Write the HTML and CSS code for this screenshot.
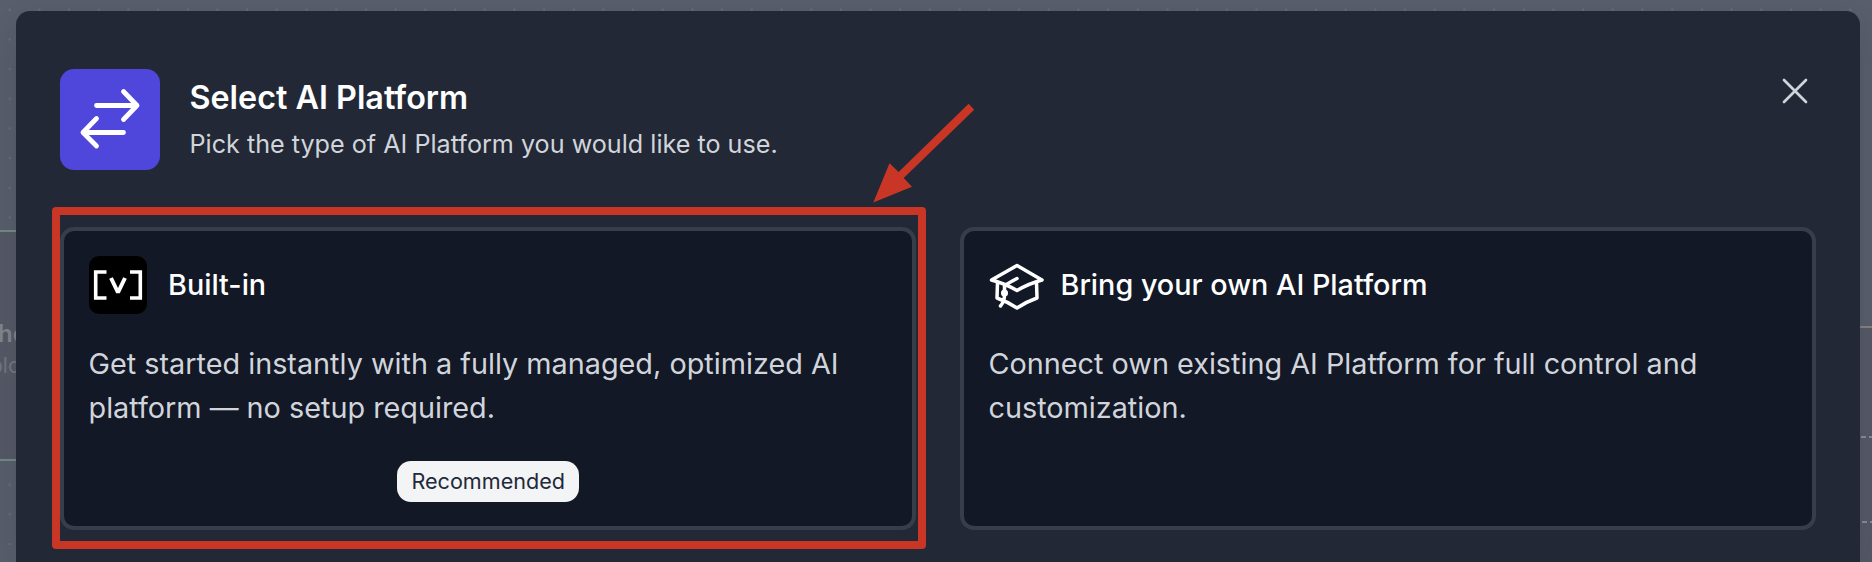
FILE: index.html
```html
<!DOCTYPE html>
<html lang="en">
<head>
<meta charset="utf-8">
<title>Select AI Platform</title>
<link rel="stylesheet" href="styles.css">
</head>
<body>
<div class="canvas">
  <div class="node node-left"><b>ho</b><span>plo</span></div>
  <div class="node node-right"><i class="dash dash-one"></i><i class="dash dash-two"></i></div>
</div>
<main class="modal">
  <header class="head">
    <div class="head-icon">
      <svg width="100" height="101" viewBox="0 0 100 101" fill="none" stroke="#fff" stroke-width="4.8" stroke-linecap="round" stroke-linejoin="round"><path d="M36.500 36.500H77M63.500 22.500L77 36.500L63.500 50.500M63.500 63.500H23M36.500 49.500L23 63.500L36.500 77"/></svg>
    </div>
    <div class="head-text">
      <h1 class="title">Select AI Platform</h1>
      <p class="subtitle">Pick the type of AI Platform you would like to use.</p>
    </div>
    <button class="close" aria-label="Close">
      <svg width="28" height="28" viewBox="0 0 28 28" fill="none" stroke="#d1d5db" stroke-width="2.7" stroke-linecap="round"><path d="M3 3L25 25M25 3L3 25"/></svg>
    </button>
  </header>
  <div class="cards">
    <section class="card">
      <div class="card-head">
        <svg class="logo" width="58" height="58" viewBox="0 0 58 58" fill="none" stroke="#fff"><rect width="58" height="58" rx="10" fill="#000" stroke="none"/><path stroke-width="3.600" d="M17.500 16H6.700V42H17.500M41 16H51.300V42H41"/><path stroke-width="4" stroke-linejoin="bevel" d="M22 22L29 36.500L36 22"/></svg>
        <h2 class="card-title">Built-in</h2>
      </div>
      <p class="card-text">Get started instantly with a fully managed, optimized AI platform — no setup required.</p>
      <span class="badge">Recommended</span>
    </section>
    <section class="card">
      <div class="card-head card-head-own">
        <svg class="cap" width="56" height="58" viewBox="0 0 56 58" fill="none" stroke="#fff" stroke-width="3.5" stroke-linecap="round" stroke-linejoin="round"><path d="M2.500 24L28 9.500L53 24Q40 27.500 28 34.500Q16 27.500 2.500 24ZM8.500 26L8 42Q18 45.500 28 52Q38 45.500 48 42L47.500 26M28 22.500Q20 26.500 15.500 30V37Q16 45 11.500 50"/><circle cx="15.500" cy="37" r="1.800" fill="#fff"/></svg>
        <h2 class="card-title">Bring your own AI Platform</h2>
      </div>
      <p class="card-text">Connect own existing AI Platform for full control and customization.</p>
    </section>
  </div>
</main>
<div class="highlight"></div>
<svg class="arrow" width="104" height="102" viewBox="872 102 104 102"><path fill="#c93625" d="M873.300 202.500L889.500 163.300L898.600 172L968.600 103.700L974.200 109.700L903.700 178L912 186.700Z"/></svg>
</body>
</html>
```
FILE: styles.css
```css
* { box-sizing: border-box; }
body { margin: 0; width: 1872px; height: 562px; overflow: hidden; position: relative; display: flow-root; font-family: Inter, sans-serif; background: #595f6d; }
.canvas { position: absolute; inset: 0; overflow: hidden; background-image: radial-gradient(circle, #6c727e 0.6px, transparent 1.5px); background-size: 29.7px 29.7px; background-position: -5.2px -5.2px; }
.node { position: absolute; background: #565966; }
.node-left { left: -40px; top: 230px; width: 80px; height: 231px; border-top: 2px solid #728c83; border-bottom: 2px solid #728c83; color: #82868f; display: flex; flex-direction: column; padding: 86px 0 0 30px; }
.node-left b { font-size: 24px; line-height: 32px; font-weight: 600; padding-left: 8px; }
.node-left span { font-size: 21px; line-height: 32px; color: #737783; }
.node-right { left: 1840px; top: 326px; width: 32px; height: 236px; border-top: 2px solid #8b817d; }
.dash { position: absolute; left: 21px; top: 108px; width: 11px; height: 2px; background: repeating-linear-gradient(90deg, #898d98 0 5px, transparent 5px 8px); }
.dash-two { top: 193px; left: 22px; width: 10px; }
.modal { position: relative; width: 1844px; height: 551px; margin: 11px 0 0 16px; padding: 58px 44px 0; border-radius: 14px 14px 0 0; background: #222835; box-shadow: 0 12px 40px rgba(20, 25, 40, .16); }
.head { display: flex; height: 101px; }
.head-icon { width: 100px; height: 101px; border-radius: 14px; background: #4f46dc; }
.head-icon svg, .close svg { display: block; }
.head-text { flex: 1; padding: 7px 0 0 29.500px; }
.title { margin: 0; font-size: 32.300px; line-height: 44px; font-weight: 600; color: #fff; }
.subtitle { margin: 3px 0 0; font-size: 25.170px; line-height: 42px; color: #d1d5db; }
.close { width: 28px; height: 28px; margin: 7.500px 7.500px 0 0; padding: 0; border: 0; background: none; }
.cards { display: grid; grid-template-columns: 1fr 1fr; gap: 44px; margin-top: 57px; }
.card { height: 303px; padding: 25px 24px 25px 24.500px; border: 4px solid #363d4b; border-radius: 14px; background: #121826; display: flex; flex-direction: column; }
.card-head { display: flex; align-items: center; gap: 21.500px; height: 58px; }
.card-head-own { gap: 16px; }
.card-title { margin: 0; font-size: 28.750px; line-height: 42px; font-weight: 500; color: #fff; }
.card-text { margin: 28px 0 0; font-size: 28.800px; line-height: 44px; color: #d1d5db; }
.badge { align-self: center; margin: 31px 0 0; width: 182px; height: 41px; border-radius: 14px; background: #f3f4f6; color: #222938; font-size: 21.600px; line-height: 41px; text-align: center; }
.highlight { position: absolute; left: 52px; top: 207px; width: 874px; height: 342px; border: 8px solid #c93625; border-radius: 4px; }
.arrow { position: absolute; left: 872px; top: 102px; }
```
